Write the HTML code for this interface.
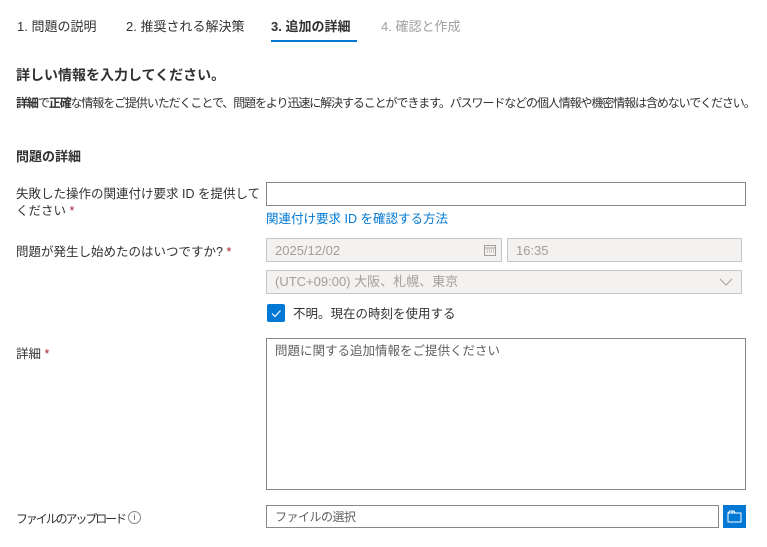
<!DOCTYPE html>
<html><head><meta charset="utf-8"><style>
body{margin:0;width:767px;height:547px;background:#fff;font-family:"Liberation Sans","Noto Sans CJK JP",sans-serif;color:#323130;position:relative;overflow:hidden}
.a{position:absolute;white-space:nowrap}
.box{position:absolute;box-sizing:border-box;border:1px solid #8a8886;background:#fff;line-height:15px}
.dis{background:#f3f2f1;border-color:#c8c6c4;color:#a19f9d}
.req{color:#a4262c}
</style></head><body>
<div class="a" style="left:17px;top:16px;font-size:13px">1. 問題の説明</div>
<div class="a" style="left:126px;top:16px;font-size:13px">2. 推奨される解決策</div>
<div class="a" style="left:271px;top:16px;font-size:13px;font-weight:bold">3. 追加の詳細</div>
<div class="a" style="left:381px;top:16px;font-size:13px;color:#a19f9d">4. 確認と作成</div>
<div class="a" style="left:271px;top:40px;width:86px;height:2px;background:#0078d4"></div>
<div class="a" style="left:16px;top:65px;font-size:14px;font-weight:bold">詳しい情報を入力してください。</div>
<div class="a" style="left:16px;top:94px;font-size:12px;letter-spacing:-1.1px"><b>詳細</b>で<b>正確</b>な情報をご提供いただくことで、問題をより迅速に解決することができます。パスワードなどの個人情報や機密情報は含めないでください。</div>
<div class="a" style="left:16px;top:146px;font-size:13px;font-weight:bold">問題の詳細</div>
<div class="a" style="left:16px;top:186px;font-size:12.5px;line-height:17px">失敗した操作の関連付け要求 ID を提供して<br>ください <span class="req">*</span></div>
<div class="box" style="left:266px;top:182px;width:480px;height:24px"></div>
<div class="a" style="left:266px;top:208px;font-size:12.5px;color:#0078d4">関連付け要求 ID を確認する方法</div>
<div class="a" style="left:16px;top:241px;font-size:12.5px">問題が発生し始めたのはいつですか? <span class="req">*</span></div>
<div class="box dis" style="left:266px;top:238px;width:236px;height:24px;font-size:13px;padding:4px 8px">2025/12/02
<svg style="position:absolute;right:5px;top:5px" width="12" height="12" viewBox="0 0 12 12"><rect x="0.5" y="1.5" width="11" height="10" fill="none" stroke="#a19f9d"/><path d="M1 4h10M3 6h1M5 6h1M7 6h1M9 6h1M3 8h1M5 8h1M7 8h1M9 8h1" stroke="#a19f9d"/></svg></div>
<div class="box dis" style="left:507px;top:238px;width:235px;height:24px;font-size:13px;padding:4px 8px">16:35</div>
<div class="box dis" style="left:266px;top:270px;width:476px;height:24px;font-size:13px;padding:3px 8px">(UTC+09:00) 大阪、札幌、東京
<svg style="position:absolute;right:8px;top:6px" width="14" height="10" viewBox="0 0 14 10"><path d="M1 2l6 6 6-6" fill="none" stroke="#a19f9d"/></svg></div>
<div class="a" style="left:267px;top:304px;width:18px;height:18px;background:#0078d4;border-radius:2px"><svg width="18" height="18" viewBox="0 0 18 18"><path d="M5 9.5l3 3 5.5-6" fill="none" stroke="#fff" stroke-width="1.2"/></svg></div>
<div class="a" style="left:293px;top:303px;font-size:12.5px">不明。現在の時刻を使用する</div>
<div class="a" style="left:16px;top:343px;font-size:12.5px">詳細 <span class="req">*</span></div>
<div class="box" style="left:266px;top:338px;width:480px;height:152px;font-size:12.5px;color:#605e5c;padding:5px 8px">問題に関する追加情報をご提供ください</div>
<div class="a" style="left:16px;top:510px;font-size:12px;letter-spacing:-2.1px">ファイルのアップロード</div>
<div class="a" style="left:128px;top:511px;width:11px;height:11px;border:1px solid #8a8886;border-radius:50%;font-size:9px;line-height:11px;text-align:center;color:#605e5c">i</div>
<div class="box" style="left:266px;top:505px;width:453px;height:23px;font-size:12px;color:#605e5c;padding:4px 8px;letter-spacing:-0.5px">ファイルの選択</div>
<div class="a" style="left:723px;top:505px;width:23px;height:23px;background:#0078d4"><svg width="23" height="23" viewBox="0 0 23 23"><path d="M5 8h13v9H5zM5 8l2-2h4l1 2M9 8l1-2" fill="none" stroke="#fff"/></svg></div>
</body></html>
